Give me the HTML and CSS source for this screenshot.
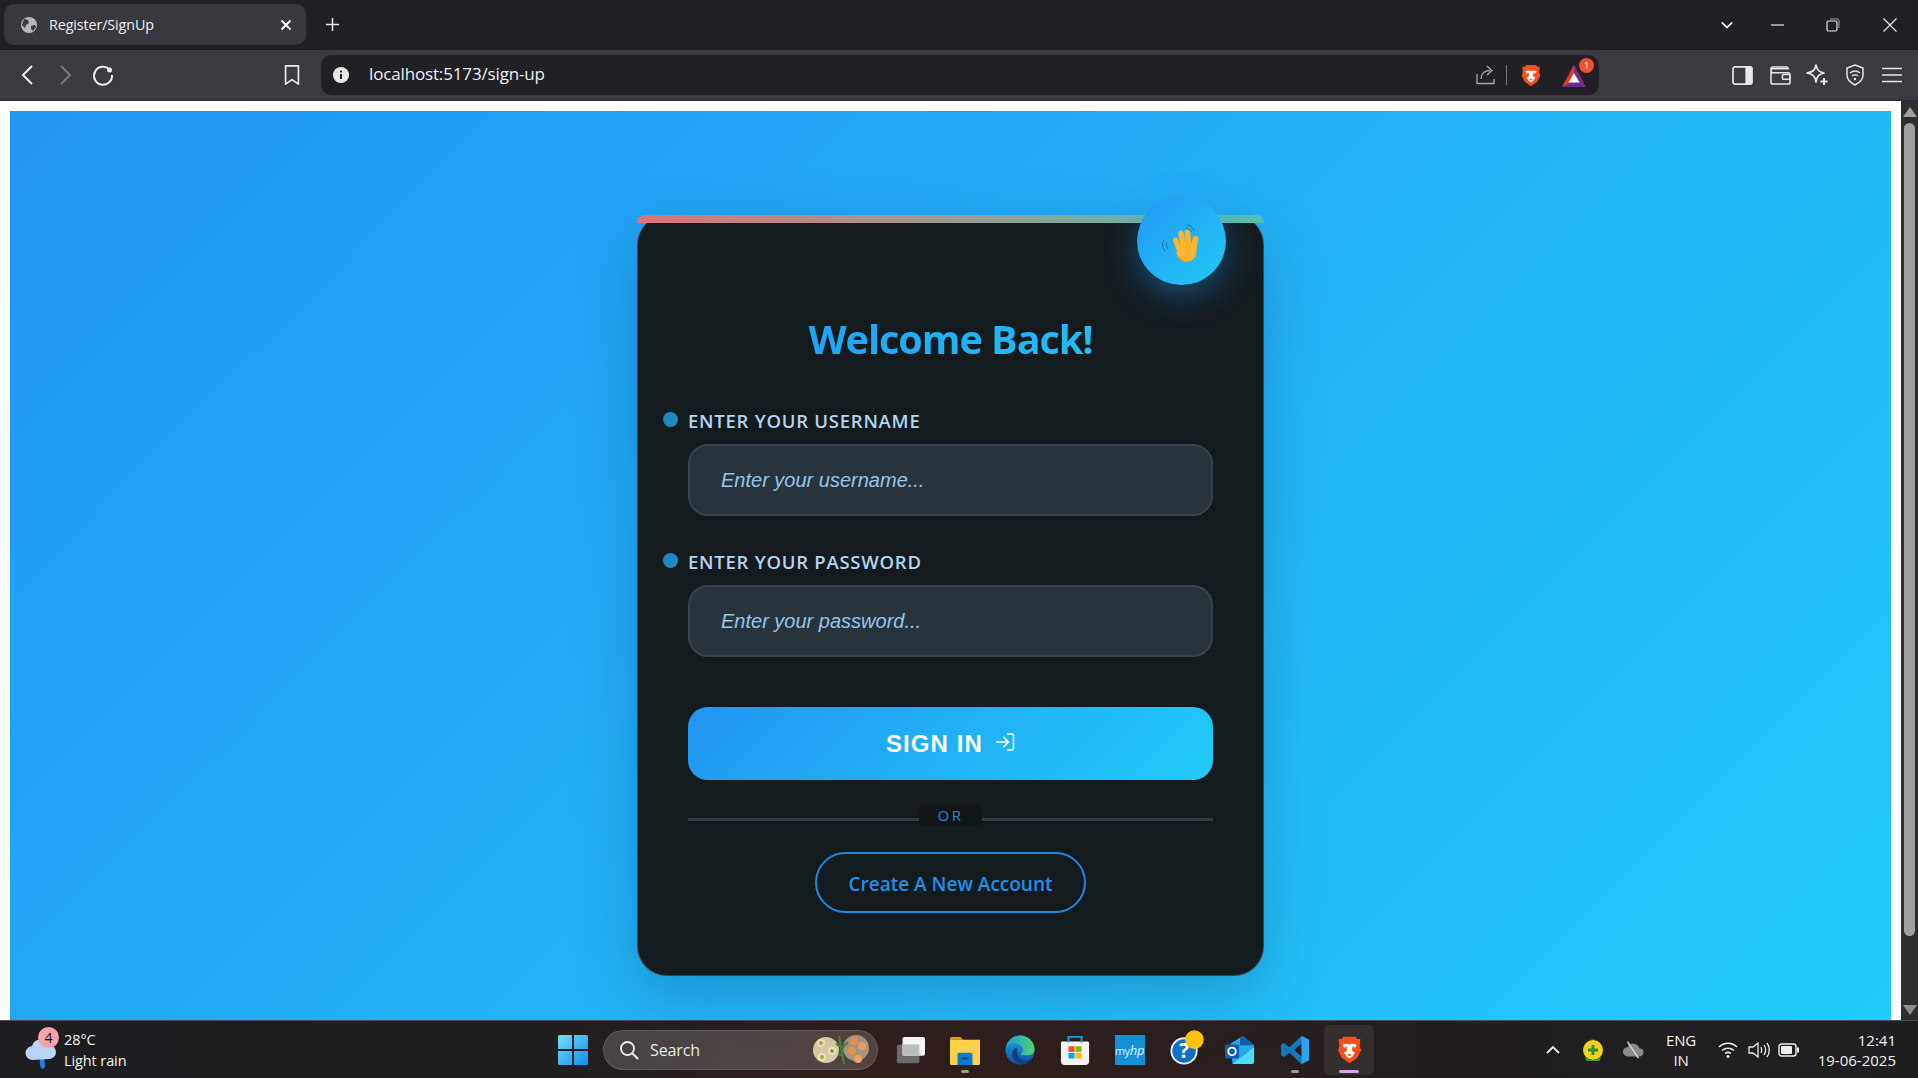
FILE: index.html
```html
<!DOCTYPE html>
<html lang="en">
<head>
<meta charset="utf-8">
<title>Register/SignUp</title>
<link rel="stylesheet" href="styles.css">
</head>
<body>
<div class="window">
  <header class="tabstrip">
    <div class="tab">
      <svg class="tab-globe" viewBox="0 0 18 18"><circle cx="9" cy="9" r="8" fill="#b5b5ba"/><path d="M4 3l4 1 1 3-3 2-1 3-3-3zM11 10l4-1 1 2-3 4-2-2z" fill="#3a3a40"/></svg>
      <span class="tab-title">Register/SignUp</span>
      <svg class="tab-close" viewBox="0 0 12 12"><path d="M1.500 1.500l9 9M10.500 1.500l-9 9" stroke="#fff" stroke-width="2"/></svg>
    </div>
    <svg class="new-tab" viewBox="0 0 16 16"><path d="M8 1v14M1 8h14" stroke="#e8e8e8" stroke-width="1.600"/></svg>
    <div class="win-controls">
      <svg class="wc wc-chev" viewBox="0 0 16 16"><path d="M2 5l6 6 6-6" fill="none" stroke="#f0f0f0" stroke-width="2"/></svg>
      <svg class="wc wc-min" viewBox="0 0 16 16"><path d="M1 8h13" stroke="#e8e8e8" stroke-width="1.200"/></svg>
      <svg class="wc wc-max" viewBox="0 0 16 16"><rect x="2" y="4" width="10" height="10" rx="1.500" fill="none" stroke="#e8e8e8" stroke-width="1.200"/><path d="M5 2h7.500a1.500 1.500 0 0 1 1.500 1.500V11" fill="none" stroke="#a8a8a8" stroke-width="1"/></svg>
      <svg class="wc wc-close" viewBox="0 0 16 16"><path d="M1.500 1.500l13 13M14.500 1.500l-13 13" stroke="#e8e8e8" stroke-width="1.200"/></svg>
    </div>
  </header>

  <nav class="toolbar">
    <svg class="tb-ic tb-back" viewBox="0 0 16 24"><path d="M12 3l-9 9 9 9" fill="none" stroke="#eee" stroke-width="2"/></svg>
    <svg class="tb-ic tb-fwd" viewBox="0 0 16 24"><path d="M4 3l9 9-9 9" fill="none" stroke="#77777c" stroke-width="2"/></svg>
    <svg class="tb-ic tb-reload" viewBox="0 0 24 24"><path d="M18.500 6.500A9 9 0 1 0 21 12" fill="none" stroke="#eee" stroke-width="2"/><circle cx="18.500" cy="7" r="2.500" fill="#eee"/></svg>
    <svg class="tb-ic tb-mark" viewBox="0 0 18 24"><path d="M2 2h14v20l-7-5-7 5z" fill="none" stroke="#eee" stroke-width="1.800" stroke-linejoin="round"/></svg>
    <div class="urlbar">
      <svg class="url-info" viewBox="0 0 16 16"><circle cx="8" cy="8" r="8" fill="#e8e8e8"/><path d="M8 7v5M8 3.500v2" stroke="#222" stroke-width="2"/></svg>
      <span class="url-text">localhost:5173/sign-up</span>
      <svg class="url-share" viewBox="0 0 20 20"><path d="M1 9v9.500h17V14M5 14c0-5 3-8.500 9-8.500M11 1l5 4.500-5 4.500" fill="none" stroke="#a8a8ac" stroke-width="1.300"/></svg>
      <span class="url-sep"></span>
      <svg class="url-brave" viewBox="0 0 32 36"><path d="M8 1h16l2 3 4 0-1 9 2 5-5 10-10 7-10-7L1 18l2-5-1-9 4 0z" fill="#f4501e"/><path d="M7 11l6-1 3 1 3-1 6 1-1 3-5 2 1 4 3 1-3 5-4 3-4-3-3-5 3-1 1-4-5-2z" fill="#fff"/><path d="M10 13l3 1v1l-2 0zM22 13l-3 1v1l2 0zM13 24l3-1 3 1-3 2z" fill="#f4501e"/></svg>
      <span class="bat">
        <svg class="bat-tri" viewBox="0 0 24 22"><path d="M12 0L24 22H0z" fill="#7d2a86"/><path d="M12 0L0 22l12-6z" fill="#e8352e"/><path d="M0 22l12-6 12 6z" fill="#662d91"/><path d="M12 8l5.500 9.500h-11z" fill="#fff"/></svg>
        <span class="bat-badge">1</span>
      </span>
    </div>
    <svg class="tb-ic tb-panel" viewBox="0 0 22 20"><rect x="1" y="1" width="20" height="18" rx="2" fill="none" stroke="#e8e8e8" stroke-width="1.800"/><rect x="14" y="1" width="7" height="18" fill="#e8e8e8"/></svg>
    <svg class="tb-ic tb-wallet" viewBox="0 0 22 20"><path d="M3 1h14a2 2 0 0 1 2 2v0H3a2 2 0 0 0 0 4h16a2 2 0 0 1 2 2v8a2 2 0 0 1-2 2H3a2 2 0 0 1-2-2V3a2 2 0 0 1 2-2z" fill="none" stroke="#e8e8e8" stroke-width="1.600"/><rect x="13" y="9" width="8" height="5" rx="1.500" fill="none" stroke="#e8e8e8" stroke-width="1.600"/></svg>
    <svg class="tb-ic tb-leo" viewBox="0 0 22 22"><path d="M10 1c1 5 3 7 8 8-5 1-7 3-8 9-1-6-3-8-9-9 6-1 8-3 9-8z" fill="none" stroke="#e8e8e8" stroke-width="1.700" stroke-linejoin="round"/><path d="M18 14v7M14.500 17.500h7" stroke="#e8e8e8" stroke-width="2"/></svg>
    <svg class="tb-ic tb-vpn" viewBox="0 0 20 22"><path d="M10 1l8 3v7c0 5-4 8-8 10-4-2-8-5-8-10V4z" fill="none" stroke="#e8e8e8" stroke-width="1.500"/><path d="M5 9c3-2.500 7-2.500 10 0M7 12c2-1.500 4-1.500 6 0" fill="none" stroke="#e8e8e8" stroke-width="1.400"/><circle cx="10" cy="15" r="1.200" fill="#e8e8e8"/></svg>
    <svg class="tb-ic tb-menu" viewBox="0 0 20 16"><path d="M0 1.500h20M0 8h20M0 14.500h20" stroke="#e8e8e8" stroke-width="1.600"/></svg>
  </nav>

  <div class="viewport">
    <main class="page">
      <section class="card">
        <span class="card-bar"></span>
        <div class="avatar">
          <svg class="hand" viewBox="0 0 44 42">
            <path d="M7 19c-1 2-1 4 1 7M4 17c-2 3-2 7 1 11" fill="none" stroke="#1672b8" stroke-width="1"/>
            <path d="M26 5c2 0 4 2 5 4M27 2c3 0 6 2 7 6" fill="none" stroke="#1672b8" stroke-width="1"/>
            <g fill="none" stroke="#fdb32e" stroke-width="5.500" stroke-linecap="round">
              <path d="M15.500 17L21 30"/>
              <path d="M21 10.500L25 29"/>
              <path d="M27.500 9.500L29.500 29"/>
              <path d="M35.500 15.500L33 30"/>
            </g>
            <ellipse cx="26.500" cy="29" rx="10" ry="10" fill="#fdb32e"/>
            <path d="M19 33c2 3 5 6 9 6-4 1-8-1-10-5z" fill="#f0951c" opacity=".7"/>
          </svg>
        </div>
        <h1 class="title">Welcome Back!</h1>
        <form class="form">
          <label class="field-label">ENTER YOUR USERNAME</label>
          <div class="input"><span class="placeholder">Enter your username...</span></div>
          <label class="field-label field-label-next">ENTER YOUR PASSWORD</label>
          <div class="input"><span class="placeholder">Enter your password...</span></div>
          <button class="signin" type="button">
            <span>SIGN IN</span>
            <svg class="signin-ic" viewBox="0 0 20 20"><path d="M1 10h12M8.500 5l5 5-5 5M12 2h5a1.500 1.500 0 0 1 1.500 1.500v13a1.500 1.500 0 0 1-1.500 1.500h-5" fill="none" stroke="#fff" stroke-width="1.500"/></svg>
          </button>
          <div class="divider"><span class="divider-text">OR</span></div>
          <button class="create" type="button">Create A New Account</button>
        </form>
      </section>
    </main>
    <aside class="scrollbar">
      <span class="sb-up"></span>
      <span class="sb-thumb"></span>
      <span class="sb-down"></span>
    </aside>
  </div>

  <footer class="taskbar">
    <div class="tb-left">
      <div class="weather-icon">
        <svg viewBox="0 0 32 36" class="weather-svg"><path d="M15 22c-.5 4-.5 8 1 12 2 1.500 4 .5 4-2l-1-10z" fill="#1e7fe8"/><path d="M8 26a7 7 0 0 1-1-14 9 9 0 0 1 17-1 7 7 0 0 1 0 14z" fill="#b9d4f8"/></svg>
        <span class="weather-badge">4</span>
      </div>
      <div class="weather-text"><span>28°C</span><span>Light rain</span></div>
    </div>
    <div class="tb-center">
      <svg class="win-logo" viewBox="0 0 30 30"><defs><linearGradient id="wl" x1="0" y1="0" x2="1" y2="1"><stop offset="0" stop-color="#7adcf7"/><stop offset="1" stop-color="#0d8ff0"/></linearGradient></defs><path d="M0 1.500A1.500 1.500 0 0 1 1.500 0H14v14H0zM16 0h12.500A1.500 1.500 0 0 1 30 1.500V14H16zM0 16h14v14H1.500A1.500 1.500 0 0 1 0 28.500zM16 16h14v12.500a1.500 1.500 0 0 1-1.500 1.500H16z" fill="url(#wl)"/></svg>
      <div class="search">
        <svg class="search-ic" viewBox="0 0 20 20"><circle cx="8.500" cy="8.500" r="6.500" fill="none" stroke="#eee" stroke-width="1.800"/><path d="M13 13l6 6" stroke="#eee" stroke-width="2"/></svg>
        <span class="search-text">Search</span>
        <svg class="search-art" viewBox="0 0 58 32"><circle cx="14" cy="16" r="13" fill="#d6c9a4"/><circle cx="44" cy="14" r="13" fill="#a8977f"/><circle cx="9" cy="9" r="4" fill="#e8e4c0"/><circle cx="9" cy="9" r="2" fill="#a5b03d"/><circle cx="20" cy="17" r="4" fill="#e8e4c0"/><circle cx="20" cy="17" r="2" fill="#8c9c2e"/><circle cx="10" cy="23" r="4" fill="#e8e4c0"/><circle cx="10" cy="23" r="2" fill="#a5b03d"/><path d="M27 2l5 28M24 10l8 4M36 8l-6 6M26 20l6 2" stroke="#4e7f3a" stroke-width="2.200" fill="none"/><circle cx="42" cy="7" r="4" fill="#ee8f52"/><circle cx="50" cy="12" r="4" fill="#f09c62"/><circle cx="40" cy="17" r="4" fill="#ee8f52"/><circle cx="46" cy="25" r="4" fill="#f0a26a"/></svg>
      </div>
      <div class="apps">
        <span class="app"><svg viewBox="0 0 32 32"><rect x="2" y="10" width="24" height="20" rx="2" fill="#6a6a6a"/><rect x="8" y="2" width="24" height="20" rx="2" fill="#f4f4f4"/><rect x="8" y="10" width="18" height="12" fill="#bdbdbd"/></svg></span>
        <span class="app app-dot"><svg viewBox="0 0 32 32"><path d="M0 4a2 2 0 0 1 2-2h9l3 3H0z" fill="#e0a00a"/><path d="M0 5h32v25a2 2 0 0 1-2 2H2a2 2 0 0 1-2-2z" fill="#fdd24b"/><path d="M8 21a2 2 0 0 1 2-2h12a2 2 0 0 1 2 2v11H8z" fill="#0f78d0"/><path d="M12 25h8" stroke="#0a4c8c" stroke-width="2"/></svg></span>
        <span class="app"><svg viewBox="0 0 32 32"><defs><linearGradient id="eb" x1="0" y1="0" x2="0" y2="1"><stop offset="0" stop-color="#20a8e8"/><stop offset="1" stop-color="#0c4f9c"/></linearGradient><linearGradient id="eg" x1="0" y1="0" x2="1" y2="0"><stop offset="0" stop-color="#1b9de2"/><stop offset="1" stop-color="#4fd16e"/></linearGradient></defs><circle cx="16" cy="16" r="15.500" fill="url(#eb)"/><path d="M1 14C3 6 9 .5 16 .5c9 0 15.500 7 15.500 15 0 3-2 6-6 6h-7c-2 0-2-1-1-2 3-2 2-7-2-9C11 8 4 9 1 14z" fill="url(#eg)"/><path d="M13 13c-4 1-6 5-5 10 1 4 5 7 10 8 5 0 8-2 11-6-3 2-8 3-12 1-3-2-5-7-4-13z" fill="#0e3f83"/></svg></span>
        <span class="app"><svg viewBox="0 0 32 32"><path d="M1 8.500A1.500 1.500 0 0 1 2.500 7h27A1.500 1.500 0 0 1 31 8.500V28a4 4 0 0 1-4 4H5a4 4 0 0 1-4-4z" fill="#f5f3f0"/><path d="M9 8V2h14v6" fill="none" stroke="#14a0e8" stroke-width="2"/><rect x="9" y="12" width="6.500" height="6" fill="#f25022"/><rect x="16.500" y="12" width="6.500" height="6" fill="#7fba00"/><rect x="9" y="19" width="6.500" height="6" fill="#00a4ef"/><rect x="16.500" y="19" width="6.500" height="6" fill="#ffb900"/></svg></span>
        <span class="app"><span class="myhp">my<b class="myhp-b">hp</b></span></span>
        <span class="app"><svg viewBox="0 0 32 32"><circle cx="15" cy="17" r="13.500" fill="#1271c4" stroke="#e8f2fa" stroke-width="2"/><text x="15" y="25" class="help-mark">?</text><circle cx="26" cy="5" r="10" fill="#fcc30e"/></svg></span>
        <span class="app"><svg viewBox="0 0 32 32"><path d="M6 9l13-8 12 10v17a3 3 0 0 1-3 3H8z" fill="#28a8ea"/><path d="M19 1l12 10H16V3z" fill="#0f5fa8"/><path d="M8 31l23-18v15a3 3 0 0 1-3 3z" fill="#50d9ff"/><rect x="0" y="10" width="15" height="15" rx="1.500" fill="#0f5cb0"/><circle cx="7.500" cy="17.500" r="4" fill="none" stroke="#fff" stroke-width="2"/></svg></span>
        <span class="app app-dot"><svg viewBox="0 0 32 32"><path fill-rule="evenodd" d="M23 1l8 4v22l-8 4L10 19l-6 4.500L1 21.500v-11L4 8.500l6 4.500zM23 9l-8 7 8 7z" fill="#1478c0"/><path d="M23 1l8 4v22l-8 4z" fill="#2ca5ee"/></svg></span>
        <span class="app app-active"><svg class="app-brave" viewBox="0 0 32 36"><path d="M8 1h16l2 3 4 0-1 9 2 5-5 10-10 7-10-7L1 18l2-5-1-9 4 0z" fill="#f4501e"/><path d="M7 11l6-1 3 1 3-1 6 1-1 3-5 2 1 4 3 1-3 5-4 3-4-3-3-5 3-1 1-4-5-2z" fill="#fff"/><path d="M10 13l3 1v1l-2 0zM22 13l-3 1v1l2 0zM13 24l3-1 3 1-3 2z" fill="#f4501e"/></svg></span>
      </div>
    </div>
    <div class="tb-right">
      <svg class="tray-chev" viewBox="0 0 14 10"><path d="M1 8l6-6 6 6" fill="none" stroke="#eee" stroke-width="1.800"/></svg>
      <svg class="tray-green" viewBox="0 0 22 22"><circle cx="11" cy="11" r="10" fill="#f2d21f"/><path d="M3 17a10 10 0 0 0 16 0 8 8 0 0 1-16 0z" fill="#3f9c35"/><path d="M5 3a10 10 0 0 1 12 0 8 8 0 0 0-12 0z" fill="#3f9c35"/><path d="M11 6v10M6 11h10" stroke="#2f8f2b" stroke-width="3"/></svg>
      <svg class="tray-cloud" viewBox="0 0 24 20"><path d="M6 17a5 5 0 0 1 0-10 7 7 0 0 1 13 1 4.500 4.500 0 0 1 0 9z" fill="#8a8a8a"/><path d="M6 1l12 18" stroke="#d8d8d8" stroke-width="1.500"/></svg>
      <div class="lang"><span>ENG</span><span>IN</span></div>
      <svg class="tray-wifi" viewBox="0 0 20 18"><path d="M1 6c5-5 13-5 18 0M4 9.500c3.500-3 8.500-3 12 0M7 12.500c2-1.500 4-1.500 6 0" fill="none" stroke="#eee" stroke-width="1.500"/><circle cx="10" cy="15.500" r="1.500" fill="#eee"/></svg>
      <svg class="tray-vol" viewBox="0 0 22 18"><path d="M1 6h4l5-4v14l-5-4H1z" fill="none" stroke="#eee" stroke-width="1.300"/><path d="M13 6c1 2 1 4 0 6M16 4c2 3 2 7 0 10M19 2c3 4 3 10 0 14" fill="none" stroke="#eee" stroke-width="1.300"/></svg>
      <svg class="tray-batt" viewBox="0 0 22 14"><rect x="1" y="1" width="17" height="12" rx="2.500" fill="none" stroke="#eee" stroke-width="1.400"/><rect x="3" y="3" width="11" height="8" rx="1" fill="#eee"/><rect x="19" y="4.500" width="2" height="5" fill="#eee"/></svg>
      <div class="clock"><span>12:41</span><span>19-06-2025</span></div>
    </div>
  </footer>
</div>
</body>
</html>
```

FILE: styles.css
```css
* { box-sizing: border-box; }
html, body { margin: 0; padding: 0; height: 100%; overflow: hidden; }
body { font-family: "Open Sans", "Noto Sans", sans-serif; background: #fff; }
svg { display: block; flex: none; }

.window { width: 1918px; height: 1078px; display: flex; flex-direction: column; }

/* tab strip */
.tabstrip { height: 50px; background: #202025; display: flex; align-items: flex-start; padding: 4px 0 0 4px; }
.tab { width: 302px; height: 41px; background: #38383e; border-radius: 10px; display: flex; align-items: center; padding: 0 14px 0 16px; color: #f0f0f0; }
.tab-globe { width: 18px; height: 18px; }
.tab-title { font-size: 14.300px; margin-left: 11px; flex: 1; letter-spacing: -.1px; }
.tab-close { width: 12px; height: 12px; }
.new-tab { width: 15px; height: 15px; margin: 13px 0 0 19px; }
.win-controls { margin-left: auto; height: 41px; display: flex; align-items: center; padding-right: 20px; }
.wc { width: 16px; height: 16px; }
.wc-chev { width: 14px; }
.wc-min { margin-left: 36px; }
.wc-max { margin-left: 39px; }
.wc-close { margin-left: 41px; }

/* toolbar */
.toolbar { height: 51px; background: #3a3a40; display: flex; align-items: center; padding-left: 20px; border-bottom: 1px solid #2a2a2e; }
.tb-back { width: 16px; height: 24px; }
.tb-fwd { width: 16px; height: 24px; margin-left: 21px; }
.tb-reload { width: 24px; height: 24px; margin-left: 18px; }
.tb-mark { width: 18px; height: 22px; margin-left: 168px; }
.urlbar { width: 1278px; height: 40px; margin-left: 20px; background: #202025; border-radius: 10px; display: flex; align-items: center; padding-left: 12px; color: #f0f0f0; }
.url-info { width: 16px; height: 16px; }
.url-text { font-size: 17px; line-height: 22px; margin: -2px 0 0 20px; flex: 1; letter-spacing: -.15px; }
.url-share { width: 20px; height: 20px; }
.url-sep { width: 1px; height: 20px; background: #77777c; margin-left: 10px; }
.url-brave { width: 20px; height: 23px; margin-left: 14px; }
.bat { position: relative; width: 24px; height: 22px; margin: 2px 13px 0 21px; }
.bat-tri { width: 24px; height: 22px; }
.bat-badge { position: absolute; top: -7px; right: -8px; width: 15px; height: 15px; border-radius: 50%; background: #f4502b; color: #fff; font-size: 9px; line-height: 15px; text-align: center; }
.tb-panel { width: 21px; height: 19px; margin-left: 133px; }
.tb-wallet { width: 21px; height: 19px; margin-left: 17px; }
.tb-leo { width: 22px; height: 22px; margin-left: 15px; }
.tb-vpn { width: 20px; height: 22px; margin-left: 17px; }
.tb-menu { width: 20px; height: 16px; margin-left: 17px; }

/* page viewport */
.viewport { height: 919px; display: flex; background: #fff; }
.page { width: 1881px; margin: 10px 10px 0 10px; height: 909px; background: linear-gradient(135deg, #2196f3 0%, #21cbf6 100%); display: flex; justify-content: center; padding-top: 104px; }
.scrollbar { width: 17px; background: #2e2e2e; display: flex; flex-direction: column; align-items: center; }
.sb-up { width: 0; height: 0; border: 7px solid transparent; border-top: 0; border-bottom: 10px solid #a0a0a0; margin-top: 6px; }
.sb-thumb { width: 11px; height: 813px; background: #a0a0a0; border-radius: 6px; margin-top: 6px; }
.sb-down { width: 0; height: 0; border: 7px solid transparent; border-bottom: 0; border-top: 10px solid #8e8e8e; margin-top: 69px; }

/* card */
.card { position: relative; width: 627px; height: 761px; background: #141b1f; border-radius: 30px; border: 1px solid rgba(255,255,255,.18); border-top: 0; padding: 99px 50px 0; box-shadow: 0 20px 60px rgba(15,55,100,.26); }
.card-bar { position: absolute; top: 0; left: -1px; right: -1px; height: 8px; border-radius: 8px 8px 0 0; background: linear-gradient(90deg, #da7578, #9b9a90 50%, #55bfb2); }
.avatar { position: absolute; top: -18px; right: 37px; width: 89px; height: 88px; border-radius: 50%; background: linear-gradient(135deg, #2196f3, #21cbf6); box-shadow: 0 10px 32px rgba(33,150,243,.42); display: flex; align-items: center; justify-content: center; }
.hand { width: 44px; height: 42px; margin: 6px 0 0 1px; }
.title { margin: 0; font-size: 39.500px; line-height: 50px; font-weight: 700; text-align: center; letter-spacing: -1px; background: linear-gradient(135deg, #2196f3, #21cbf6); -webkit-background-clip: text; background-clip: text; color: transparent; }

/* form */
.form { display: flex; flex-direction: column; margin-top: 43px; }
.field-label { position: relative; height: 25px; font-size: 18.500px; line-height: 27px; font-weight: 600; color: #b5d4ee; letter-spacing: .75px; }
.field-label::before { content: ""; position: absolute; left: -25px; top: 5px; width: 15px; height: 15px; border-radius: 50%; background: linear-gradient(135deg, #1a83c9, #1f8fb8); }
.field-label-next { margin-top: 32px; }
.input { height: 72px; margin-top: 12px; background: #29333b; border: 2px solid #38444d; border-radius: 20px; display: flex; align-items: center; padding: 1px 0 0 31px; }
.placeholder { font-family: "Liberation Sans", Arial, sans-serif; font-style: italic; font-size: 20px; color: #93c6ec; }
.signin { height: 73px; margin-top: 50px; border: 0; border-radius: 20px; background: linear-gradient(135deg, #2196f3, #21cbf6); color: #fff; font-family: "Liberation Sans", Arial, sans-serif; font-weight: 700; font-size: 24px; letter-spacing: 1.100px; display: flex; align-items: center; justify-content: center; gap: 12px; padding: 0; }
.signin-ic { width: 20px; height: 20px; margin-top: -4px; }
.divider { position: relative; height: 3px; margin-top: 38px; background: #333c43; display: flex; justify-content: center; }
.divider-text { position: absolute; top: -13px; width: 63px; height: 20px; background: #111518; color: #1e86d8; font-size: 15px; line-height: 20px; text-align: center; letter-spacing: 2.500px; }
.create { align-self: center; width: 271px; height: 61px; margin-top: 31px; background: transparent; border: 2px solid #2187dc; border-radius: 31px; color: #2090ea; font-family: "Open Sans", sans-serif; font-weight: 600; font-size: 19px; padding: 2px 0 0; }

/* taskbar */
.taskbar { flex: 1; background: linear-gradient(90deg, #1e1e22 0%, #201e20 28%, #2f1f1b 45%, #2d1f1d 60%, #221e20 74%, #1f1f21 100%); border-top: 1px solid #4a4d52; display: flex; align-items: center; padding-top: 1px; color: #f2f2f2; }
.tb-left { width: 558px; padding-left: 25px; display: flex; align-items: center; }
.weather-icon { position: relative; width: 32px; height: 36px; margin-top: 4px; }
.weather-svg { width: 32px; height: 36px; }
.weather-badge { position: absolute; top: -7px; left: 13px; width: 21px; height: 21px; border-radius: 50%; background: #f8a2a9; color: #111; font-size: 14px; line-height: 21px; text-align: center; }
.weather-text { display: flex; flex-direction: column; margin-left: 7px; font-size: 14.500px; line-height: 21px; letter-spacing: -.1px; }
.tb-center { display: flex; align-items: center; }
.win-logo { width: 30px; height: 30px; }
.search { width: 275px; height: 40px; margin-left: 15px; background: rgba(255,255,255,.17); border: 1px solid rgba(255,255,255,.12); border-radius: 20px; display: flex; align-items: center; padding: 0 7px 0 15px; }
.search-ic { width: 20px; height: 20px; }
.search-text { flex: 1; font-size: 16px; margin-left: 11px; color: #e8e8e8; letter-spacing: -.1px; }
.search-art { width: 58px; height: 32px; }
.apps { display: flex; align-items: center; margin-left: 4px; }
.app { position: relative; width: 55px; height: 50px; display: flex; align-items: center; justify-content: center; }
.app svg { width: 30px; height: 30px; overflow: visible; }
.app .app-brave { width: 25px; height: 28px; }
.app-dot::after { content: ""; position: absolute; bottom: 2px; left: 24px; width: 8px; height: 3px; border-radius: 2px; background: #9a9a9a; }
.app-active { width: 50px; margin-left: 2px; background: rgba(255,255,255,.07); border-radius: 5px; }
.app-active::after { content: ""; position: absolute; bottom: 2px; left: 15px; width: 20px; height: 3px; border-radius: 2px; background: #d8a5ec; }
.myhp { width: 30px; height: 30px; background: #1590d6; color: #dff4ff; font-size: 11px; line-height: 30px; text-align: center; letter-spacing: -.3px; }
.myhp-b { font-style: italic; font-size: 13px; font-weight: 400; }
.help-mark { font-family: "Open Sans", sans-serif; font-weight: 700; font-size: 22px; fill: #fff; text-anchor: middle; }
.tb-right { margin-left: auto; width: 374px; display: flex; align-items: center; padding-right: 22px; }
.tray-chev { width: 14px; height: 10px; margin-left: 2px; }
.tray-green { width: 22px; height: 22px; margin-left: 22px; }
.tray-cloud { width: 22px; height: 20px; margin-left: 18px; }
.lang { display: flex; flex-direction: column; align-items: center; margin-left: 17px; width: 40px; font-size: 15px; line-height: 20px; letter-spacing: -.2px; }
.tray-wifi { width: 20px; height: 18px; margin-left: 17px; }
.tray-vol { width: 22px; height: 18px; margin-left: 10px; }
.tray-batt { width: 22px; height: 14px; margin-left: 8px; }
.clock { margin-left: auto; display: flex; flex-direction: column; align-items: flex-end; font-size: 15px; line-height: 20px; }
```
